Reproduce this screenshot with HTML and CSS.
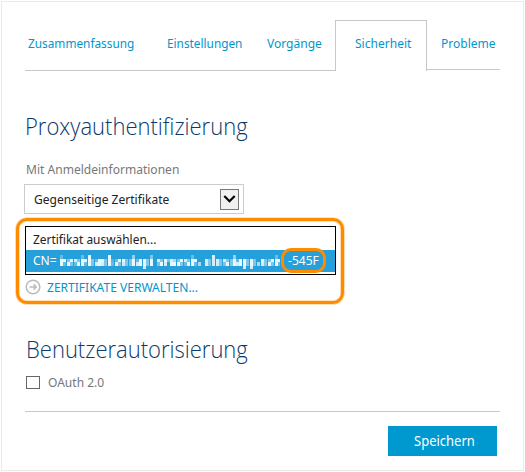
FILE: index.html
```html
<!DOCTYPE html>
<html lang="de">
<head>
<meta charset="utf-8">
<title>Sicherheit</title>
<link rel="stylesheet" href="styles.css">
</head>
<body>
<main class="panel">
  <nav class="tabs">
    <a class="tab tab-summary"><span>Zusammenfassung</span></a>
    <a class="tab tab-settings"><span>Einstellungen</span></a>
    <a class="tab tab-operations"><span>Vorgänge</span></a>
    <a class="tab tab-active"><span>Sicherheit</span></a>
    <a class="tab tab-issues"><span>Probleme</span></a>
  </nav>
  <h2 class="heading proxy"><span>Proxyauthentifizierung</span></h2>
  <div class="label"><span>Mit Anmeldeinformationen</span></div>
  <div class="select">
    <span>Gegenseitige Zertifikate</span>
    <div class="arrow"><svg width="13" height="9" viewBox="0 0 13 9"><path d="M1.3 1 6.5 6.2 11.7 1" fill="none" stroke="#000" stroke-width="2.2"/></svg></div>
  </div>
  <section class="callout">
    <div class="list">
      <div class="option"><span class="choose">Zertifikat auswählen...</span></div>
      <div class="option selected"><span class="cn">CN=</span><svg class="mosaic" width="220" height="15" shape-rendering="crispEdges"></svg><div class="suffix"><span>-545F</span></div></div>
    </div>
    <a class="manage">
      <svg width="16" height="16" viewBox="0 0 16 16" fill="none" stroke="#bbb" stroke-width="1.5"><circle cx="8" cy="8" r="6.8"/><path d="M4.5 8h6.5M8.5 5.2 11.3 8 8.5 10.8"/></svg>
      <span>ZERTIFIKATE VERWALTEN...</span>
    </a>
  </section>
  <h2 class="heading user"><span>Benutzerautorisierung</span></h2>
  <label class="check"><i class="box"></i><span>OAuth 2.0</span></label>
  <footer class="footer"><button class="save"><span>Speichern</span></button></footer>
</main>
<script src="mosaic.js"></script>
</body>
</html>
```
FILE: styles.css
```css
* { box-sizing: border-box; }
body { margin: 0; background: #fff; font: 12.5px/18px "Noto Sans", "Open Sans", sans-serif; color: #222; }
span { display: inline-block; white-space: nowrap; transform: scaleX(.963); transform-origin: 0 0; }
.panel { display: flow-root; width: 523px; height: 470px; margin: 1px; border: 1px solid #eaeaea; padding: 18px 23px 0 23px; }
.tabs { display: grid; grid-template-columns: 139px 100px 71px 92px 73px; height: 51px; width: 475px; }
.tab { color: #0096cc; border-bottom: 1px solid #c8c8c8; padding: 15px 0 0 3px; }
.tab-summary span, .tab-settings span { transform: scaleX(.945); }
.tab-active { border: 1px solid #c8c8c8; border-bottom: 0; padding: 14px 0 0 19px; }
.tab-issues { height: 50px; padding-left: 14px; }
.heading { margin: 0; color: #0b3a6c; font: 300 24px/34px "Open Sans", sans-serif; height: 34px; }
.heading span { transform: scaleX(.917); }
.proxy { margin-top: 38px; }
.label { margin-top: 18px; height: 18px; color: #777; padding-left: 1px; }
.select { display: flex; justify-content: space-between; margin: 5px 0 0 -1px; width: 220px; height: 30px; border: 1px solid #ccc; padding: 4px 4px 0 9px; }
.select span { margin-top: 2px; }
.arrow { width: 19px; height: 21px; border: 1px solid #777; background: #f0f0f0; display: grid; place-items: center; }
.callout { margin: 4px 0 0 -9px; width: 328px; height: 86px; border: 3px solid #ff8c00; border-radius: 11px; padding: 5px 6px; box-shadow: 0 0 0 .6px #ffc57c, inset 0 0 0 .6px #ffc57c; }
.list { width: 311px; height: 49px; border: 1px solid #000; }
.option { height: 23px; padding: 4px 0 0 7px; }
.choose { transform: scaleX(.953); }
.selected { display: flex; height: 22px; padding-top: 2px; background: #26a0da; color: #fff; }
.cn { width: 27px; }
.mosaic { margin-top: 3px; fill: #fff; }
.suffix { width: 45px; height: 25px; margin: -4px 0 0 1px; padding: 1px 0 0 4px; border: 3px solid #ff8c00; border-radius: 10px; }
.manage { display: flex; gap: 6px; color: #0096cc; margin-top: 4px; }
.user { margin-top: 28px; padding-left: 1px; }
.check { display: flex; margin: 9px 0 0 1px; height: 18px; color: #777; }
.check span { margin-top: -1px; }
.box { width: 14px; height: 13px; margin: 1px 8px 0 0; border: 1px solid #666; }
.footer { width: 475px; border-top: 1px solid #c8c8c8; margin-top: 18px; padding: 14px 3px 0; display: flex; justify-content: flex-end; }
.save { width: 109px; height: 30px; border: 0; background: #0099cf; color: #fff; font: 13.5px/18px "Noto Sans", sans-serif; padding: 0 0 1px 26px; text-align: left; }
```
FILE: mosaic.js
```
// Coarse cells that obscure the host name; each digit is a cell's opacity in tenths.
const cells = [
  "30 00 00 30 90 00 00 90 00 00 05 00 00 40 00 00 00 00 00 30 00 00 8 00 00 05 00 00 00 0 00 00 30",
  "99 49 84 99 94 39 94 92 39 94 49 39 94 90 84 94 86 49 84 99 00 84 8 84 84 49 39 94 94 0 94 49 99",
  "93 94 39 93 94 89 84 93 94 84 49 89 94 90 49 80 99 94 39 93 60 84 8 84 49 49 89 94 94 6 84 94 93",
  "00 00 00 00 00 00 00 00 00 00 00 00 80 00 00 00 00 00 00 00 00 00 0 00 00 00 00 80 80 0 00 00 00"
];
const svg = document.querySelector(".mosaic");
cells.forEach((row, y) => {
  let x = 0;
  row.split(" ").forEach(letter => {
    for (const v of letter) {
      if (v !== "0") {
        const r = document.createElementNS("http://www.w3.org/2000/svg", "rect");
        r.setAttribute("x", x);
        r.setAttribute("y", y * 3.5);
        r.setAttribute("width", 3);
        r.setAttribute("height", 3.5);
        r.setAttribute("fill-opacity", v / 10);
        svg.append(r);
      }
      x += 3;
    }
    x += 0.9;
  });
});
```
